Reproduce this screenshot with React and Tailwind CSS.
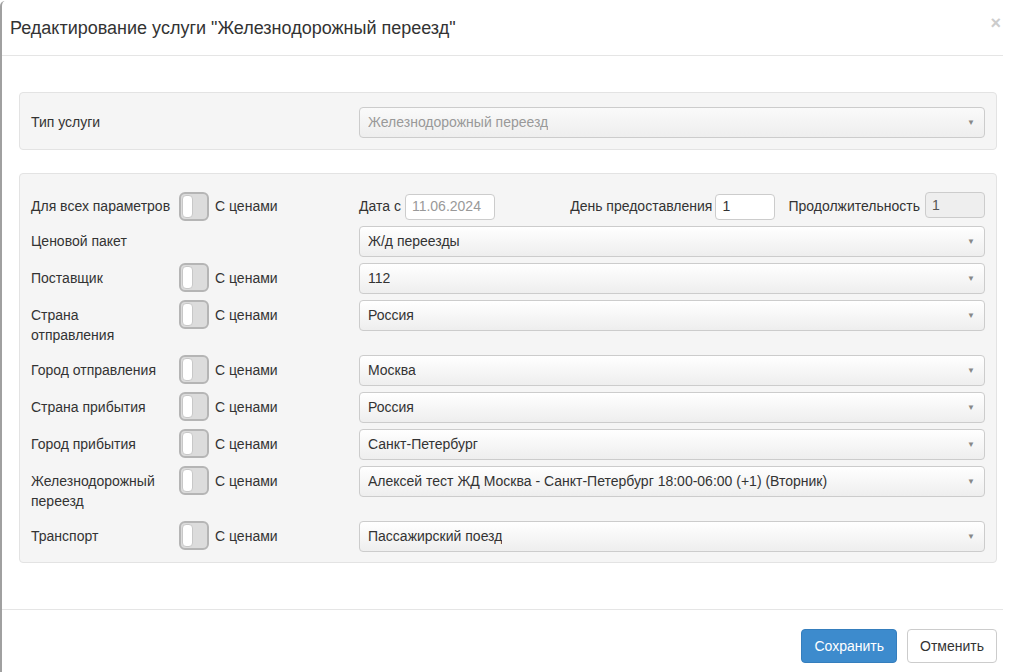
import React from "react";

function Toggle() {
  return (
    <div className="w-[30px] h-[29px] rounded-[6px] border-2 border-[#b5b5b5] bg-[#dcdcdc] p-[1px] flex shrink-0">
      <div className="w-[11px] h-full rounded-[4px] bg-white border border-[#c8c8c8]" />
    </div>
  );
}

function Select({ value, disabled }) {
  return (
    <div
      className={
        "h-[31px] w-full rounded-[4px] border border-[#cccccc] flex items-center justify-between pl-[8px] pr-[9px] bg-gradient-to-b " +
        (disabled
          ? "from-[#fafafa] to-[#eeeeee] text-[#999999]"
          : "from-white to-[#eeeeee] text-[#333333]")
      }
    >
      <span className="truncate">{value}</span>
      <span className="text-[8px] text-[#888888]">▼</span>
    </div>
  );
}

const rows = [
  ["Ценовой пакет", "Ж/д переезды", false],
  ["Поставщик", "112", true],
  ["Страна отправления", "Россия", true],
  ["Город отправления", "Москва", true],
  ["Страна прибытия", "Россия", true],
  ["Город прибытия", "Санкт-Петербург", true],
  ["Железнодорожный переезд", "Алексей тест ЖД Москва - Санкт-Петербург 18:00-06:00 (+1) (Вторник)", true],
  ["Транспорт", "Пассажирский поезд", true],
];

export default function App() {
  return (
    <div
      className="w-[1014px] h-[672px] bg-white overflow-hidden text-[14px] text-[#333333]"
      style={{ fontFamily: '"Liberation Sans", Arial, sans-serif' }}
    >
      <div className="w-[1003px] h-[680px] mt-[1px] border-l-2 border-[#a0a0a0] rounded-tl-[5px]">
        {/* header */}
        <div className="h-[55px] border-b border-[#e5e5e5] flex items-center justify-between pl-[8px] pr-[2px]">
          <h1 className="text-[18px] leading-none">Редактирование услуги "Железнодорожный переезд"</h1>
          <span className="text-[18px] font-bold text-[#cccccc] leading-none -mt-[10px]">×</span>
        </div>

        {/* body */}
        <div className="pt-[36px] pl-[17px] h-[553px]">
          <div className="w-[978px] bg-[#f5f5f5] border border-[#e3e3e3] rounded-[4px] pt-[14px] pb-[11px] pl-[11px] pr-[11px] flex items-center">
            <div className="w-[328px]">Тип услуги</div>
            <div className="flex-1">
              <Select value="Железнодорожный переезд" disabled />
            </div>
          </div>

          <div className="w-[978px] mt-[23px] bg-[#f5f5f5] border border-[#e3e3e3] rounded-[4px] pt-[17px] pb-[10px] pl-[11px] pr-[11px]">
            <div className="flex items-center h-[31px] mb-[4px]">
              <div className="w-[328px] flex items-center">
                <span className="w-[148px]">Для всех параметров</span>
                <Toggle />
                <span className="ml-[6px]">С ценами</span>
              </div>
              <div className="flex-1 flex items-center">
                <span>Дата с</span>
                <div className="ml-[4px] w-[90px] h-[26px] border border-[#cccccc] rounded-[4px] bg-white flex items-center px-[6px] text-[#999999]">
                  11.06.2024
                </div>
                <span className="ml-auto">День предоставления</span>
                <div className="ml-[3px] w-[60px] h-[26px] border border-[#cccccc] rounded-[4px] bg-white flex items-center px-[6px]">
                  1
                </div>
                <span className="ml-[13px]">Продолжительность</span>
                <div className="ml-[5px] w-[60px] h-[26px] -mt-[3px] border border-[#cccccc] rounded-[4px] bg-[#eeeeee] flex items-center px-[6px] text-[#555555]">
                  1
                </div>
              </div>
            </div>

            {rows.map(([label, value, toggle]) => (
              <div key={label} className="flex items-start min-h-[31px] mb-[6px] last:mb-0">
                <div className="w-[328px] flex items-start">
                  <span className="w-[148px] pt-[5px] pb-[4px] leading-[20px] pr-[20px]">{label}</span>
                  {toggle && (
                    <>
                      <Toggle />
                      <span className="ml-[6px] pt-[5px] leading-[20px]">С ценами</span>
                    </>
                  )}
                </div>
                <div className="flex-1">
                  <Select value={value} />
                </div>
              </div>
            ))}
          </div>
        </div>

        {/* footer */}
        <div className="border-t border-[#e5e5e5] pt-[19px] pr-[6px] flex justify-end gap-[10px]">
          <button className="h-[34px] px-[12px] rounded-[4px] bg-[#3d8bcd] border border-[#357ebd] text-white">
            Сохранить
          </button>
          <button className="h-[34px] px-[12px] rounded-[4px] bg-white border border-[#cccccc] text-[#333333]">
            Отменить
          </button>
        </div>
      </div>
    </div>
  );
}
